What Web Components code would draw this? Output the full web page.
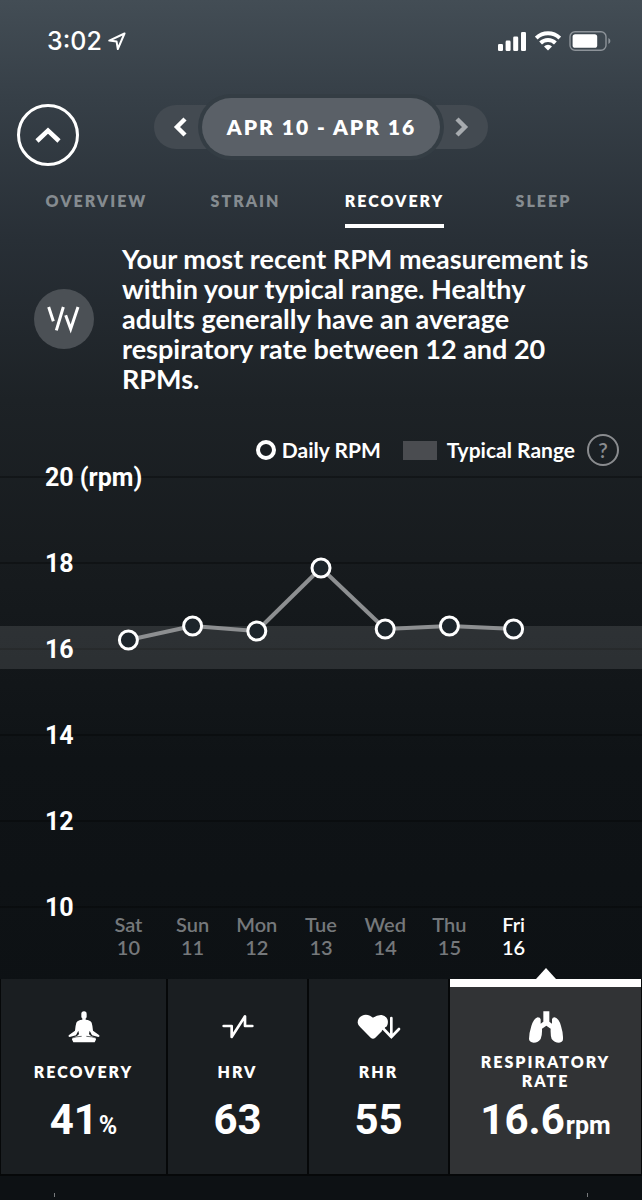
<!DOCTYPE html>
<html lang="en">
<head>
<meta charset="utf-8">
<meta name="viewport" content="width=device-width, initial-scale=1">
<title>Recovery - Respiratory Rate</title>
<style>
    html {
        background: #0d1114;
    }
    body {
        margin: 0;
        font-family: Lato, "Open Sans", sans-serif;
        color: #fff;
    }
</style>
</head>
<body>
<recovery-page></recovery-page>

<script>
class StatusBar extends HTMLElement {
    constructor() {
        super();
        this.attachShadow({ mode: "open" });
    }

    connectedCallback() {
        this.shadowRoot.innerHTML = `
            <style>
                :host {
                    display: flex;
                    justify-content: space-between;
                    align-items: center;
                    height: 82px;
                    padding: 0 31px 0 47px;
                    font: 500 25px/30px Inter, sans-serif;
                }
                .time, .signals {
                    display: flex;
                    align-items: center;
                }
                .time { gap: 6px; }
                .signals { gap: 8px; }
                svg { display: block; }
            </style>
            <div class="time">
                <span>${this.getAttribute('time')}</span>
                <svg width="18" height="19" viewBox="0 0 18 19" fill="none" stroke="#fff" stroke-width="2" stroke-linejoin="round">
                    <path d="M16.5 1.5 L1.3 8.6 L8.6 9.6 L9.8 17 Z"/>
                </svg>
            </div>
            <div class="signals">
                <svg width="30" height="20" viewBox="0 0 30 20" fill="#fff">
                    <rect x="1" y="13" width="5" height="7" rx="1.3"/>
                    <rect x="8.6" y="9.6" width="5" height="10.4" rx="1.3"/>
                    <rect x="16.2" y="5.4" width="5" height="14.6" rx="1.3"/>
                    <rect x="24" y="1" width="5" height="19" rx="1.3"/>
                </svg>
                <svg width="26" height="20" viewBox="0 0 26 20" fill="none" stroke="#fff" stroke-width="4">
                    <path d="M1.2 7.1 A17 17 0 0 1 24.8 7.1"/>
                    <path d="M5.6 12 A10.6 10.6 0 0 1 20.4 12"/>
                    <path d="M9 15.4 A5.8 5.8 0 0 1 17 15.4 L13 19.6 Z" fill="#fff" stroke="none"/>
                </svg>
                <svg width="42" height="20" viewBox="0 0 42 20">
                    <rect x="1" y=".7" width="36" height="18.6" rx="5" fill="none" stroke="#8d9399" stroke-width="1.4"/>
                    <rect x="3.6" y="3.2" width="24.6" height="13.6" rx="2.6" fill="#fff"/>
                    <path d="M39.4 7 Q41.4 8 41.4 10 Q41.4 12 39.4 13 Z" fill="#8d9399"/>
                </svg>
            </div>
        `;
    }
}

class DateHeader extends HTMLElement {
    constructor() {
        super();
        this.attachShadow({ mode: "open" });
    }

    connectedCallback() {
        this.shadowRoot.innerHTML = `
            <style>
                :host {
                    display: grid;
                    grid-template-columns: 1fr auto 1fr;
                    padding: 16px 17px 0;
                    align-items: start;
                }
                button {
                    display: flex;
                    align-items: center;
                    justify-content: center;
                    box-sizing: border-box;
                    padding: 0;
                    border: 0;
                    background: none;
                    color: inherit;
                    font: inherit;
                    cursor: pointer;
                }
                .collapse {
                    width: 62px;
                    height: 62px;
                    margin-top: 6px;
                    border: 3px solid #fff;
                    border-radius: 50%;
                }
                .range {
                    display: flex;
                    align-items: center;
                }
                .step {
                    width: 80px;
                    height: 44px;
                    background: #434a51;
                }
                .prev {
                    border-radius: 22px 0 0 22px;
                    justify-content: flex-start;
                    padding-left: 19px;
                }
                .next {
                    border-radius: 0 22px 22px 0;
                    justify-content: flex-end;
                    padding-right: 19px;
                    color: #a7abaf;
                }
                .current {
                    position: relative;
                    height: 58px;
                    margin: 0 -32px;
                    padding: 0 24px 0 25px;
                    border-radius: 29px;
                    background: #5a6067;
                    box-shadow: 0 0 0 4px #343d44;
                    font-weight: 800;
                    font-size: 21px;
                    line-height: 28px;
                    letter-spacing: 2px;
                    white-space: nowrap;
                }
            </style>
            <button class="collapse" aria-label="Collapse">
                <svg width="26" height="17" viewBox="0 0 26 17" fill="none" stroke="#fff" stroke-width="4.6"><path d="M2 14 L13 3.6 L24 14"/></svg>
            </button>
            <div class="range">
                <button class="step prev" aria-label="Previous week">
                    <svg width="14" height="20" viewBox="0 0 14 20" fill="none" stroke="currentColor" stroke-width="4.4"><path d="M12 2 L4 10 L12 18"/></svg>
                </button>
                <button class="current"><slot></slot></button>
                <button class="step next" aria-label="Next week">
                    <svg width="14" height="20" viewBox="0 0 14 20" fill="none" stroke="currentColor" stroke-width="4.4"><path d="M2 2 L10 10 L2 18"/></svg>
                </button>
            </div>
        `;
    }
}

class SectionTabs extends HTMLElement {
    constructor() {
        super();
        this.attachShadow({ mode: "open" });
    }

    connectedCallback() {
        const active = this.getAttribute('active');
        const tabs = this.getAttribute('tabs').split(',');

        this.shadowRoot.innerHTML = `
            <style>
                :host { display: block; }
                nav {
                    display: grid;
                    grid-template-columns: repeat(4, 1fr);
                    justify-items: center;
                    padding: 22px 24px 0 22px;
                }
                a {
                    padding: 3px 0 13px;
                    border-bottom: 4px solid transparent;
                    color: #858b90;
                    font-weight: 800;
                    font-size: 16px;
                    line-height: 20px;
                    letter-spacing: 2px;
                    text-decoration: none;
                }
                a[aria-current] {
                    color: #fff;
                    border-color: #fff;
                }
            </style>
            <nav>
                ${tabs.map(tab => `<a href="#${tab.toLowerCase()}" ${tab === active ? 'aria-current="page"' : ''}>${tab}</a>`).join('')}
            </nav>
        `;
    }
}

class InsightNote extends HTMLElement {
    constructor() {
        super();
        this.attachShadow({ mode: "open" });
    }

    connectedCallback() {
        this.shadowRoot.innerHTML = `
            <style>
                :host {
                    display: flex;
                    align-items: center;
                    gap: 28px;
                    padding: 16px 44px 0 34px;
                }
                svg { flex: none; }
                p {
                    margin: 0;
                    font-weight: 700;
                    font-size: 27px;
                    line-height: 30px;
                }
            </style>
            <svg width="60" height="60" viewBox="0 0 180 180" fill="none" stroke="#fff" stroke-width="9">
                <circle cx="90" cy="90" r="90" fill="#4b5055" stroke="none"/>
                <path d="M44 54 L58 97 M88 54 L67 124 M95 79 L110 120 L132 54"/>
            </svg>
            <p><slot></slot></p>
        `;
    }
}

class ChartLegend extends HTMLElement {
    constructor() {
        super();
        this.attachShadow({ mode: "open" });
    }

    connectedCallback() {
        this.shadowRoot.innerHTML = `
            <style>
                :host {
                    display: flex;
                    justify-content: flex-end;
                    align-items: center;
                    padding: 40px 23px 0;
                    font-weight: 700;
                    font-size: 21px;
                    line-height: 24px;
                }
                .dot {
                    box-sizing: border-box;
                    width: 20px;
                    height: 20px;
                    margin-right: 6px;
                    border: 4px solid #fff;
                    border-radius: 50%;
                }
                .band {
                    width: 34px;
                    height: 19px;
                    margin: 0 10px 0 22px;
                    background: #4a4c50;
                }
                button {
                    box-sizing: border-box;
                    width: 32px;
                    height: 32px;
                    margin-left: 12px;
                    padding: 0;
                    border: 2px solid #8a8c8f;
                    border-radius: 50%;
                    background: none;
                    color: #8a8c8f;
                    font: 600 21px/24px Lato, sans-serif;
                    cursor: pointer;
                }
            </style>
            <span class="dot"></span><span>Daily RPM</span>
            <span class="band"></span><span>Typical Range</span>
            <button>?</button>
        `;
    }
}

class RpmChart extends HTMLElement {
    constructor() {
        super();
        this.attachShadow({ mode: "open" });
        this.top = 11;
        this.unit = 43;
        this.days = ['Sat 10', 'Sun 11', 'Mon 12', 'Tue 13', 'Wed 14', 'Thu 15', 'Fri 16'];
        this.values = [16.2, 16.54, 16.42, 17.88, 16.46, 16.54, 16.46];
    }

    connectedCallback() {
        this.render();
    }

    y(value) {
        return Math.round(this.top + (20 - value) * this.unit);
    }

    x(index) {
        return `${20 + index * 10}%`;
    }

    buildGrid() {
        return [20, 18, 16, 14, 12, 10].map(tick => `
            <line class="grid" x1="0" x2="100%" y1="${this.y(tick)}" y2="${this.y(tick)}"/>
        `).join('');
    }

    buildLabels() {
        return [20, 18, 16, 14, 12, 10].map(tick => `
            <text x="7%" y="${this.y(tick) + 9}">${tick}${tick === 20 ? ' (rpm)' : ''}</text>
        `).join('');
    }

    buildSeries() {
        let lines = '';
        let dots = '';

        this.values.forEach((value, i) => {
            if (i > 0) {
                lines += `<line class="series" x1="${this.x(i - 1)}" y1="${this.y(this.values[i - 1])}" x2="${this.x(i)}" y2="${this.y(value)}"/>`;
            }
            dots += `<circle cx="${this.x(i)}" cy="${this.y(value)}" r="9"/>`;
        });

        return lines + dots;
    }

    render() {
        this.shadowRoot.innerHTML = `
            <style>
                :host { display: block; }
                svg {
                    display: block;
                    width: 100%;
                    height: 447px;
                    overflow: visible;
                }
                .grid {
                    stroke: #000;
                    stroke-opacity: .28;
                    stroke-width: 2;
                }
                .range { fill: rgba(255, 255, 255, .11); }
                .series {
                    stroke: #8d8f91;
                    stroke-width: 4;
                }
                circle {
                    fill: #1d252b;
                    stroke: #fff;
                    stroke-width: 3;
                }
                text {
                    fill: #fff;
                    font: 700 25px Roboto, sans-serif;
                }
                .days {
                    display: grid;
                    grid-template-columns: repeat(7, 1fr);
                    padding: 0 15%;
                    text-align: center;
                    font-weight: 600;
                    font-size: 20px;
                    line-height: 23px;
                    color: #75787b;
                }
                .days span:last-child { color: #fff; }
            </style>
            <svg role="img" aria-label="Daily RPM">
                ${this.buildGrid()}
                <rect class="range" x="0" y="${this.y(16.54)}" width="100%" height="43"/>
                ${this.buildLabels()}
                ${this.buildSeries()}
            </svg>
            <div class="days">
                ${this.days.map(day => `<span>${day.replace(' ', '<br>')}</span>`).join('')}
            </div>
        `;
    }
}

class MetricTile extends HTMLElement {
    constructor() {
        super();
        this.attachShadow({ mode: "open" });
    }

    connectedCallback() {
        this.shadowRoot.innerHTML = `
            <style>
                :host {
                    display: flex;
                    position: relative;
                    background: #1a1e21;
                }
                :host([selected]) { background: #313335; }
                :host([selected])::before {
                    content: "";
                    position: absolute;
                    inset: 0 0 auto;
                    height: 8px;
                    background: #fff;
                }
                :host([selected])::after {
                    content: "";
                    position: absolute;
                    top: -11px;
                    left: calc(50% - 10px);
                    border: solid transparent;
                    border-width: 0 10px 11px;
                    border-bottom-color: #fff;
                }
                button {
                    display: flex;
                    flex-direction: column;
                    align-items: center;
                    width: 100%;
                    padding: 30px 0;
                    border: 0;
                    background: none;
                    color: inherit;
                    font: inherit;
                    cursor: pointer;
                }
                .icon {
                    display: flex;
                    align-items: center;
                    height: 36px;
                }
                .label {
                    display: flex;
                    align-items: center;
                    max-width: 140px;
                    height: 38px;
                    margin: 7px 0 6px;
                    font-weight: 800;
                    font-size: 16px;
                    line-height: 19px;
                    letter-spacing: 2px;
                }
                .value {
                    font: 700 42px/48px Roboto, sans-serif;
                }
                .unit {
                    margin-left: 1px;
                    font-size: 25px;
                    line-height: 1;
                }
            </style>
            <button>
                <span class="icon"><slot></slot></span>
                <span class="label">${this.getAttribute('label')}</span>
                <span class="value">${this.getAttribute('value')}${this.hasAttribute('unit') ? `<span class="unit">${this.getAttribute('unit')}</span>` : ''}</span>
            </button>
        `;
    }
}

class RecoveryPage extends HTMLElement {
    constructor() {
        super();
        this.attachShadow({ mode: "open" });
    }

    connectedCallback() {
        this.shadowRoot.innerHTML = `
            <style>
                :host {
                    display: block;
                    min-height: 100vh;
                    background: linear-gradient(#434d55 0, #363f47 100px, #282f36 240px, #1d2226 400px, #171b1e 560px, #0f1316 760px, #0d1114 1000px);
                }
                .tiles {
                    display: grid;
                    grid-template-columns: 165fr 139fr 139fr 191fr;
                    gap: 2px;
                    margin-top: 20px;
                    padding: 0 1px 2px;
                    background: #060809;
                }
                .marks {
                    display: flex;
                    justify-content: space-between;
                    padding: 17px 54px 0;
                }
                .marks i {
                    width: 1px;
                    height: 4px;
                    background: #777a7c;
                }
            </style>
            <status-bar time="3:02"></status-bar>
            <date-header>APR 10 - APR 16</date-header>
            <section-tabs tabs="OVERVIEW,STRAIN,RECOVERY,SLEEP" active="RECOVERY"></section-tabs>
            <insight-note>Your most recent RPM measurement is within your typical range. Healthy adults generally have an average respiratory rate between 12 and 20 RPMs.</insight-note>
            <chart-legend></chart-legend>
            <rpm-chart></rpm-chart>
            <div class="tiles">
                <metric-tile label="RECOVERY" value="41" unit="%">
                    <svg width="34" height="34" viewBox="200 362 102 102" fill="#fff">
                        <rect x="243" y="366" width="16" height="23" rx="8"/>
                        <path d="M246 387 H256 V391 Q270 392 274 400 Q277 410 278 424 L297 438 Q299 443 294 443 L275 438 L268 424 L266 434 Q270 441 284 444 Q290 448 286 453 L283 459 H219 L216 453 Q212 448 218 444 Q232 441 236 434 L234 424 L227 438 L208 443 Q203 443 205 438 L224 424 Q225 410 228 400 Q232 392 246 391 Z"/>
                        <path d="M212 447 Q228 441 244 441 M290 447 Q274 441 258 441" fill="none" stroke="#1a1e21" stroke-width="2"/>
                    </svg>
                </metric-tile>
                <metric-tile label="HRV" value="63">
                    <svg width="32" height="26" viewBox="664 372 96 78" fill="none" stroke="#fff" stroke-width="8" stroke-linecap="round" stroke-linejoin="round">
                        <path d="M669 408 H693 V441 L733 379 V408 H755"/>
                    </svg>
                </metric-tile>
                <metric-tile label="RHR" value="55">
                    <svg width="44" height="26" viewBox="106 372 132 78" fill="#fff">
                        <path d="M154 383 L145 377 Q132 372 121 377 Q108 384 108 398 Q109 406 116 412 L147 443 Q154 449 161 443 L196 408 Q201 397 197 387 Q191 376 180 375 Q167 374 154 383 Z"/>
                        <path d="M209 384 V441 M186 417 L209 441 L232 417" fill="none" stroke="#1a1e21" stroke-width="17"/>
                        <path d="M209 384 V441 M186 417 L209 441 L232 417" fill="none" stroke="#fff" stroke-width="8" stroke-linecap="round"/>
                    </svg>
                </metric-tile>
                <metric-tile label="RESPIRATORY RATE" value="16.6" unit="rpm" selected>
                    <svg width="36" height="34" viewBox="618 362 108 102" fill="#fff">
                        <path d="M664 366 H682 V397 L690 403 V390 Q691 384 698 384 Q711 388 717 410 Q724 432 723 449 Q723 459 711 460 Q697 460 689 449 Q685 438 686 418 L673 409 L660 418 Q661 438 656 449 Q649 460 635 460 Q622 459 621 449 Q621 432 628 410 Q635 388 647 384 Q655 384 656 390 V403 L664 397 Z"/>
                    </svg>
                </metric-tile>
            </div>
            <div class="marks"><i></i><i></i></div>
        `;
    }
}

customElements.define('status-bar', StatusBar);
customElements.define('date-header', DateHeader);
customElements.define('section-tabs', SectionTabs);
customElements.define('insight-note', InsightNote);
customElements.define('chart-legend', ChartLegend);
customElements.define('rpm-chart', RpmChart);
customElements.define('metric-tile', MetricTile);
customElements.define('recovery-page', RecoveryPage);
</script>
</body>
</html>
